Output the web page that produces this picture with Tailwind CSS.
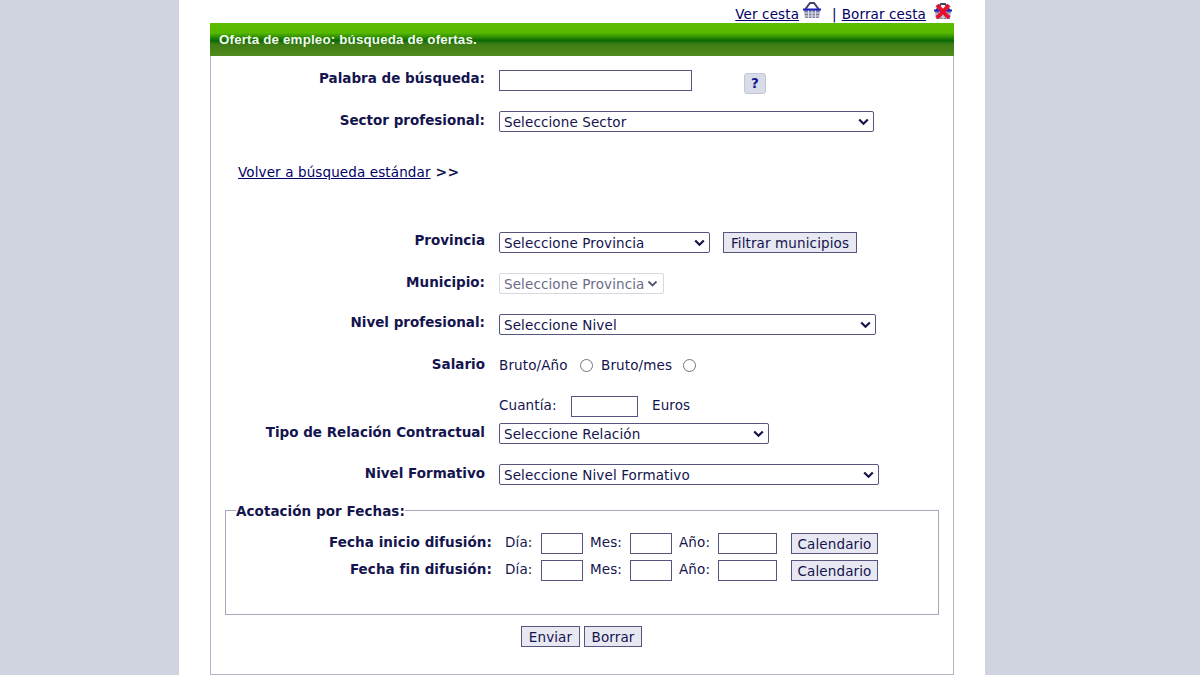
<!DOCTYPE html>
<html lang="es"><head><meta charset="utf-8"><title>Oferta de empleo</title>
<script src="https://cdn.jsdelivr.net/npm/@tailwindcss/browser@4"></script></head>
<body class="m-0 h-[675px] overflow-hidden bg-[#d0d3e0] font-['DejaVu_Sans',Verdana,sans-serif] text-[13.5px] tracking-[0.12px] text-[#14144e]">
<div class="ml-[179px] h-[675px] w-[806px] overflow-hidden bg-white pl-[31px]">
  <div class="flex h-[23px] w-[744px] items-start justify-end pr-[1px]">
    <a href="#" class="mt-[6px] leading-[16px] text-[#000066] underline">Ver cesta</a>
    <svg class="ml-[3px] mt-[1px]" width="20" height="18" viewBox="0 0 20 18"><path d="M3.500 8 8 2h4l4.500 6" fill="none" stroke="#3e4368" stroke-width="2"/><path d="M2 9h16l-1 8H3z" fill="#7f83a0"/><path d="M2 12h16M2 15h16M6.500 9v8M10 9v8M13.500 9v8" stroke="#dfe0ec"/><path d="M1 8.500h18" stroke="#1c1cc0" stroke-width="2"/></svg>
    <span class="ml-[10px] mt-[6px] leading-[16px] text-[#000066]">|</span>
    <a href="#" class="ml-[5px] mt-[6px] leading-[16px] text-[#000066] underline">Borrar cesta</a>
    <svg class="ml-[7px] mt-[2px]" width="20" height="18" viewBox="0 0 20 18"><path d="M3.500 8 8 2h4l4.500 6" fill="none" stroke="#3e4368" stroke-width="2"/><path d="M2 9h16l-1 8H3z" fill="#7f83a0"/><path d="M2 12h16M2 15h16M6.500 9v8M10 9v8M13.500 9v8" stroke="#dfe0ec"/><path d="M1 8.500h18" stroke="#1c1cc0" stroke-width="2"/><path d="M4 3 16 16M16 3 4 16" stroke="#e8102a" stroke-width="4"/></svg>
  </div>
  <div class="relative h-[652px] w-[744px] border-x border-b border-[#b4b6c8]">
    <div class="-mx-px h-[33px] bg-[linear-gradient(#5cbc00_0%,#58b800_30%,#0a6a04_53%,#3f7d14_65%,#528c20_100%)] pl-[9px] pt-[8px] font-['Liberation_Sans',Arial,sans-serif] text-[13.33px] font-bold leading-[17px] tracking-[0.18px] text-[#f4f8ee]">Oferta de empleo: búsqueda de ofertas.</div>
    <div class="pt-[14px]">
      <div class="flex h-[41px] items-start">
        <label class="w-[274px] text-right font-bold leading-[17px] tracking-normal">Palabra de búsqueda:</label>
        <input type="text" class="ml-[14px] h-[21px] w-[193px] border border-[#55557f] bg-white">
        <button type="button" class="ml-[52px] mt-[3px] h-[21px] w-[22px] rounded-[3px] border border-[#c4c6d4] bg-[#d8dbe8] font-bold leading-[17px] text-[#14148e]">?</button>
      </div>
      <div class="flex h-[41px] items-start">
        <label class="mt-px w-[274px] text-right font-bold leading-[17px] tracking-normal">Sector profesional:</label>
        <div class="relative ml-[14px] h-[21px] w-[375px]">
          <select class="h-full w-full appearance-none rounded-[2px] border border-[#55557f] bg-white pb-[2px] pl-[4px]"><option>Seleccione Sector</option></select>
          <svg class="pointer-events-none absolute right-[5px] top-[7px]" width="11" height="8" viewBox="0 0 11 8"><path d="M1.200 1.500 5.500 5.800 9.800 1.500" fill="none" stroke="#14144e" stroke-width="2.200"/></svg>
        </div>
      </div>
      <div class="flex h-[80px] items-start pl-[27px] pt-[12px]">
        <a href="#" class="leading-[17px] text-[#000066] underline">Volver a búsqueda estándar</a>
        <span class="ml-[5px] text-[14px] font-bold leading-[17px]">&gt;&gt;</span>
      </div>
      <div class="flex h-[41px] items-start">
        <label class="w-[274px] text-right font-bold leading-[17px] tracking-normal">Provincia</label>
        <div class="relative ml-[14px] h-[21px] w-[211px]">
          <select class="h-full w-full appearance-none rounded-[2px] border border-[#55557f] bg-white pb-[2px] pl-[4px]"><option>Seleccione Provincia</option></select>
          <svg class="pointer-events-none absolute right-[5px] top-[7px]" width="11" height="8" viewBox="0 0 11 8"><path d="M1.200 1.500 5.500 5.800 9.800 1.500" fill="none" stroke="#14144e" stroke-width="2.200"/></svg>
        </div>
        <button type="button" class="ml-[13px] h-[21px] w-[134px] border border-[#55557f] bg-[#e8e8f2] pb-[2px]">Filtrar municipios</button>
      </div>
      <div class="flex h-[41px] items-start">
        <label class="mt-px w-[274px] text-right font-bold leading-[17px] tracking-normal">Municipio:</label>
        <div class="relative ml-[14px] h-[21px] w-[165px]">
          <select disabled class="h-full w-full appearance-none rounded-[2px] border border-[#d8d8e0] bg-white pb-[2px] pl-[4px] text-[#6c6c88]"><option>Seleccione Provincia</option></select>
          <svg class="pointer-events-none absolute right-[6px] top-[7px]" width="11" height="8" viewBox="0 0 11 8"><path d="M1.500 1.500 5.500 5.500 9.500 1.500" fill="none" stroke="#55556f" stroke-width="1.800"/></svg>
        </div>
      </div>
      <div class="flex h-[42px] items-start">
        <label class="w-[274px] text-right font-bold leading-[17px] tracking-normal">Nivel profesional:</label>
        <div class="relative ml-[14px] h-[21px] w-[377px]">
          <select class="h-full w-full appearance-none rounded-[2px] border border-[#55557f] bg-white pb-[2px] pl-[4px]"><option>Seleccione Nivel</option></select>
          <svg class="pointer-events-none absolute right-[5px] top-[7px]" width="11" height="8" viewBox="0 0 11 8"><path d="M1.200 1.500 5.500 5.800 9.800 1.500" fill="none" stroke="#14144e" stroke-width="2.200"/></svg>
        </div>
      </div>
      <div class="flex h-[40px] items-start">
        <label class="w-[274px] text-right font-bold leading-[17px] tracking-normal">Salario</label>
        <div class="ml-[14px] mt-[1px] flex h-[17px] items-center leading-[17px]"><span class="w-[70px]">Bruto/Año</span><input type="radio" name="s" class="ml-[11px] size-[13px] appearance-auto"><span class="ml-[8px] w-[73px]">Bruto/mes</span><input type="radio" name="s" class="ml-[9px] size-[13px] appearance-auto"></div>
      </div>
      <div class="flex h-[27px] items-start pl-[288px]">
        <span class="mt-[1px] w-[72px] leading-[17px]">Cuantía:</span>
        <input type="text" class="h-[21px] w-[67px] border border-[#55557f]">
        <span class="ml-[14px] mt-[1px] leading-[17px]">Euros</span>
      </div>
      <div class="flex h-[41px] items-start">
        <label class="mt-px w-[274px] text-right font-bold leading-[17px] tracking-normal">Tipo de Relación Contractual</label>
        <div class="relative ml-[14px] h-[21px] w-[270px]">
          <select class="h-full w-full appearance-none rounded-[2px] border border-[#55557f] bg-white pb-[2px] pl-[4px]"><option>Seleccione Relación</option></select>
          <svg class="pointer-events-none absolute right-[5px] top-[7px]" width="11" height="8" viewBox="0 0 11 8"><path d="M1.200 1.500 5.500 5.800 9.800 1.500" fill="none" stroke="#14144e" stroke-width="2.200"/></svg>
        </div>
      </div>
      <div class="flex h-[38px] items-start">
        <label class="mt-px w-[274px] text-right font-bold leading-[17px] tracking-normal">Nivel Formativo</label>
        <div class="relative ml-[14px] h-[21px] w-[380px]">
          <select class="h-full w-full appearance-none rounded-[2px] border border-[#55557f] bg-white pb-[2px] pl-[4px]"><option>Seleccione Nivel Formativo</option></select>
          <svg class="pointer-events-none absolute right-[5px] top-[7px]" width="11" height="8" viewBox="0 0 11 8"><path d="M1.200 1.500 5.500 5.800 9.800 1.500" fill="none" stroke="#14144e" stroke-width="2.200"/></svg>
        </div>
      </div>
      <fieldset class="relative mx-[14px] h-[113px] w-[714px] border border-[#a8a8bc]">
        <legend class="ml-[10px] translate-y-px px-0 font-bold leading-[17px] tracking-[0.05px]">Acotación por Fechas:</legend>
        <div class="mt-[14px] flex h-[27px] items-start">
          <label class="mt-px w-[266px] text-right font-bold leading-[17px] tracking-[0.07px]">Fecha inicio difusión:</label>
          <span class="ml-[13px] mt-px w-[36px] leading-[17px]">Día:</span><input type="text" class="h-[21px] w-[42px] border border-[#55557f]">
          <span class="ml-[7px] mt-px w-[40px] leading-[17px]">Mes:</span><input type="text" class="h-[21px] w-[42px] border border-[#55557f]">
          <span class="ml-[7px] mt-px w-[39px] leading-[17px]">Año:</span><input type="text" class="h-[21px] w-[59px] border border-[#55557f]">
          <button type="button" class="ml-[14px] h-[21px] w-[87px] border border-[#55557f] bg-[#e8e8f2] pb-[2px]">Calendario</button>
        </div>
        <div class="flex h-[27px] items-start">
          <label class="mt-px w-[266px] text-right font-bold leading-[17px] tracking-[0.07px]">Fecha fin difusión:</label>
          <span class="ml-[13px] mt-px w-[36px] leading-[17px]">Día:</span><input type="text" class="h-[21px] w-[42px] border border-[#55557f]">
          <span class="ml-[7px] mt-px w-[40px] leading-[17px]">Mes:</span><input type="text" class="h-[21px] w-[42px] border border-[#55557f]">
          <span class="ml-[7px] mt-px w-[39px] leading-[17px]">Año:</span><input type="text" class="h-[21px] w-[59px] border border-[#55557f]">
          <button type="button" class="ml-[14px] h-[21px] w-[87px] border border-[#55557f] bg-[#e8e8f2] pb-[2px]">Calendario</button>
        </div>
      </fieldset>
      <div class="mt-[11px] flex justify-center gap-[4px] pr-[1px]">
        <button type="button" class="h-[21px] w-[59px] border border-[#55557f] bg-[#e8e8f2] pb-[2px]">Enviar</button>
        <button type="button" class="h-[21px] w-[58px] border border-[#55557f] bg-[#e8e8f2] pb-[2px]">Borrar</button>
      </div>
    </div>
  </div>
</div>
</body></html>
